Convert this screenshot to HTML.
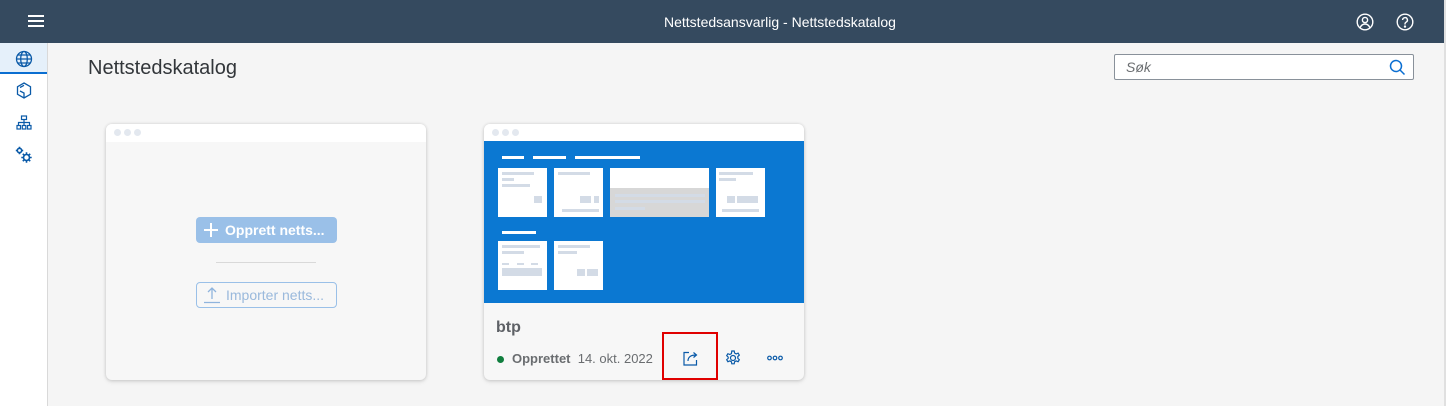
<!DOCTYPE html>
<html><head><meta charset="utf-8"><style>
*{box-sizing:border-box;margin:0;padding:0}
body{width:1446px;height:406px;overflow:hidden;background:#f5f5f5;font-family:"Liberation Sans",sans-serif;position:relative}
.a{position:absolute}
.hdr{left:0;top:0;width:1444px;height:43px;background:#354a5f}
.side{left:0;top:43px;width:48px;height:363px;background:#fff;border-right:1px solid #d9d9d9}
.card{background:#f7f7f7;border-radius:6px;box-shadow:0 0 3px rgba(0,0,0,.15),0 2px 4px rgba(0,0,0,.1);overflow:hidden}
.tb{height:18px;background:#fff;position:relative}
.dot{position:absolute;top:5px;width:7px;height:7px;border-radius:50%;background:#e3e8ef}
.w{background:#fff;position:absolute}
.g{background:#d3dbe6;position:absolute}
</style></head><body>
<div class="a hdr"></div>
<div class="a" style="left:1444px;top:0;width:2px;height:406px;background:#e0e0e0"></div>
<svg class="a" style="left:27px;top:14px" width="18" height="14"><path d="M1 2h16M1 7h16M1 12h16" stroke="#fff" stroke-width="2"/></svg>
<div class="a" style="left:664px;top:13px;color:#fff;font-size:14px;line-height:18px;white-space:nowrap">Nettstedsansvarlig - Nettstedskatalog</div>
<svg class="a" style="left:1356px;top:13px" width="18" height="18" fill="none" stroke="#fff" stroke-width="1.4"><circle cx="9" cy="9" r="7.8"/><circle cx="9" cy="7" r="2.6"/><path d="M4.2 14.5c1.2-2.6 3-3.5 4.8-3.5s3.6.9 4.8 3.5"/></svg>
<svg class="a" style="left:1396px;top:13px" width="18" height="18" fill="none" stroke="#fff" stroke-width="1.4"><circle cx="9" cy="9" r="7.8"/><path d="M6.6 7a2.4 2.4 0 1 1 3.4 2.2c-.7.4-1 .9-1 1.7v.6"/><circle cx="9" cy="13.6" r=".5" fill="#fff"/></svg>
<div class="a side"></div>
<div class="a" style="left:0;top:43px;width:47px;height:31px;background:#e5f0fa;border-bottom:2px solid #0a6ed1"></div>
<svg class="a" style="left:15px;top:50px" width="18" height="18" fill="none" stroke="#0a5aa8" stroke-width="1.3"><circle cx="9" cy="9" r="7.5"/><ellipse cx="9" cy="9" rx="3.3" ry="7.5"/><path d="M1.5 9h15M3 5h12M3 13h12"/></svg>
<svg class="a" style="left:16px;top:82px" width="16" height="17" fill="none" stroke="#0a5aa8" stroke-width="1.3"><path d="M8 1l6.5 3.7v7.6L8 16l-6.5-3.7V4.7z"/><path d="M4 5.5l4-2.2M8 16v-5l-4-2"/></svg>
<svg class="a" style="left:16px;top:115px" width="16" height="16" fill="none" stroke="#0a5aa8" stroke-width="1.2"><rect x="5.5" y="1" width="5" height="3.5"/><path d="M8 4.5v3M2.5 10V7.5h11V10M8 7.5V10"/><rect x="1" y="10.5" width="3.5" height="3.5"/><rect x="6.3" y="10.5" width="3.5" height="3.5"/><rect x="11.5" y="10.5" width="3.5" height="3.5"/></svg>
<svg class="a" style="left:15px;top:146px" width="18" height="18" fill="none" stroke="#0a5aa8" stroke-width="1.6"><circle cx="4.5" cy="4.5" r="2.2"/><path d="M4.5 0.8v1.5M4.5 6.7v1.5M0.8 4.5h1.5M6.7 4.5h1.5"/><circle cx="11.5" cy="11.5" r="3"/><path d="M11.5 6.3v2M11.5 14.7v2M6.3 11.5h2M14.7 11.5h2M7.8 7.8l1.4 1.4M13.8 13.8l1.4 1.4M7.8 15.2l1.4-1.4M13.8 9.2l1.4-1.4"/></svg>
<div class="a" style="left:88px;top:57px;font-size:20px;color:#32363a">Nettstedskatalog</div>
<div class="a" style="left:1114px;top:54px;width:300px;height:26px;background:#fff;border:1px solid #89919a;border-radius:2px"></div>
<div class="a" style="left:1126px;top:59px;font-size:14px;font-style:italic;color:#6a6d70">Søk</div>
<svg class="a" style="left:1389px;top:59px" width="17" height="17" fill="none" stroke="#0a6ed1" stroke-width="1.5"><circle cx="7" cy="7" r="5.5"/><path d="M11 11l4.5 4.5"/></svg>

<div class="a card" style="left:106px;top:124px;width:320px;height:256px">
<div class="tb"><div class="dot" style="left:8px"></div><div class="dot" style="left:18px"></div><div class="dot" style="left:28px"></div></div>
<div class="a" style="left:90px;top:93px;width:141px;height:26px;background:#9ac0e8;border-radius:4px;color:#fff;font-weight:bold;font-size:14px;line-height:26px;padding-left:29px">Opprett netts...</div>
<svg class="a" style="left:98px;top:99px" width="14" height="14"><path d="M7 0v14M0 7h14" stroke="#fff" stroke-width="2"/></svg>
<div class="a" style="left:110px;top:138px;width:100px;height:1px;background:#d9d9d9"></div>
<div class="a" style="left:90px;top:158px;width:141px;height:26px;border:1px solid #9ac0e8;border-radius:4px;color:#9ab9dc;font-size:14px;line-height:24px;padding-left:29px">Importer netts...</div>
<svg class="a" style="left:97px;top:162px" width="18" height="18" fill="none" stroke="#8fb4dd" stroke-width="1.3"><path d="M9 2v11M5 6l4-4 4 4M1 16.5h16"/></svg>
</div>

<div class="a card" style="left:484px;top:124px;width:320px;height:256px">
<div class="tb"><div class="dot" style="left:8px"></div><div class="dot" style="left:18px"></div><div class="dot" style="left:28px"></div></div>
<div class="a" style="left:0;top:17px;width:320px;height:162px;background:#0b78d2">
<div class="w" style="left:18px;top:15px;width:22px;height:3px"></div>
<div class="w" style="left:49px;top:15px;width:33px;height:3px"></div>
<div class="w" style="left:91px;top:15px;width:65px;height:3px"></div>
<div class="w" style="left:14px;top:27px;width:49px;height:49px"><div class="g" style="left:4px;top:4px;width:32px;height:3px"></div><div class="g" style="left:4px;top:10px;width:12px;height:3px"></div><div class="g" style="left:4px;top:16px;width:28px;height:3px"></div><div class="g" style="left:36px;top:28px;width:8px;height:7px"></div></div>
<div class="w" style="left:70px;top:27px;width:49px;height:49px"><div class="g" style="left:4px;top:4px;width:32px;height:3px"></div><div class="g" style="left:26px;top:28px;width:11px;height:7px"></div><div class="g" style="left:40px;top:28px;width:5px;height:7px"></div><div class="g" style="left:8px;top:41px;width:37px;height:3px"></div></div>
<div class="w" style="left:126px;top:27px;width:99px;height:49px"><div style="position:absolute;left:0;top:20px;width:99px;height:29px;background:#d7d7d7"></div><div class="g" style="left:5px;top:26px;width:90px;height:3px"></div><div class="g" style="left:5px;top:32px;width:90px;height:3px"></div><div class="g" style="left:5px;top:39px;width:30px;height:3px"></div></div>
<div class="w" style="left:232px;top:27px;width:49px;height:49px"><div class="g" style="left:3px;top:4px;width:34px;height:3px"></div><div class="g" style="left:3px;top:10px;width:17px;height:3px"></div><div class="g" style="left:11px;top:28px;width:8px;height:7px"></div><div class="g" style="left:21px;top:28px;width:21px;height:7px"></div><div class="g" style="left:6px;top:41px;width:37px;height:3px"></div></div>
<div class="w" style="left:18px;top:90px;width:34px;height:3px"></div>
<div class="w" style="left:14px;top:100px;width:49px;height:49px"><div class="g" style="left:4px;top:4px;width:38px;height:3px"></div><div class="g" style="left:4px;top:10px;width:22px;height:3px"></div><div class="g" style="left:4px;top:22px;width:7px;height:2px"></div><div class="g" style="left:19px;top:22px;width:7px;height:2px"></div><div class="g" style="left:33px;top:22px;width:7px;height:2px"></div><div class="g" style="left:4px;top:27px;width:40px;height:8px"></div></div>
<div class="w" style="left:70px;top:100px;width:49px;height:49px"><div class="g" style="left:4px;top:4px;width:32px;height:3px"></div><div class="g" style="left:4px;top:10px;width:19px;height:3px"></div><div class="g" style="left:23px;top:28px;width:8px;height:7px"></div><div class="g" style="left:33px;top:28px;width:11px;height:7px"></div></div>
</div>
<div class="a" style="left:12px;top:195px;font-size:16px;font-weight:bold;color:#5e6166">btp</div>
<div class="a" style="left:13px;top:232px;width:7px;height:7px;border-radius:50%;background:#107e3e"></div>
<div class="a" style="left:28px;top:227px;font-size:13px;color:#6a6d70"><b>Opprettet</b>&nbsp; 14. okt. 2022</div>
<svg class="a" style="left:199px;top:227px" width="15" height="15" fill="none" stroke="#0a5aa8" stroke-width="1.2"><path d="M6 1.5H1v12.5h12.5V9"/><path d="M5 10c0-4 3-6 8-6M10.5 1.5L13.5 4l-3 2.5"/></svg>
<svg class="a" style="left:241px;top:226px" width="16" height="16" fill="none" stroke="#0a5aa8" stroke-width="1.2"><circle cx="8" cy="8" r="2.5"/><path d="M6.8 1h2.4l.4 2 1.6.9 1.9-.8 1.2 2-1.5 1.4v1.8l1.5 1.4-1.2 2-1.9-.8-1.6.9-.4 2H6.8l-.4-2-1.6-.9-1.9.8-1.2-2 1.5-1.4V7.1L1.7 5.7l1.2-2 1.9.8 1.6-.9z"/></svg>
<svg class="a" style="left:283px;top:230px" width="16" height="8" fill="none" stroke="#0a5aa8" stroke-width="1.2"><circle cx="2.5" cy="4" r="1.8"/><circle cx="8" cy="4" r="1.8"/><circle cx="13.5" cy="4" r="1.8"/></svg>
</div>
<div class="a" style="left:662px;top:332px;width:56px;height:48px;border:2px solid #e00000"></div>
</body></html>
